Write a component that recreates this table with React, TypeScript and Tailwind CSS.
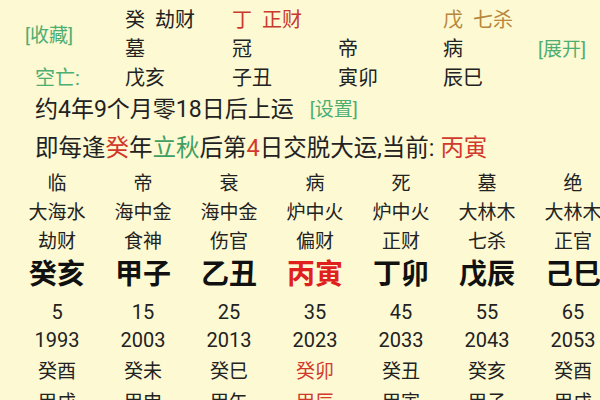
import React from 'react';

type Yun = {
  state: string;
  nayin: string;
  god: string;
  gz: string;
  age: number;
  year: number;
  y1: string;
  y2: string;
  current?: boolean;
};

const yunList: Yun[] = [
  {state: '临', nayin: '大海水', god: '劫财', gz: '癸亥', age: 5, year: 1993, y1: '癸酉', y2: '甲戌'},
  {state: '帝', nayin: '海中金', god: '食神', gz: '甲子', age: 15, year: 2003, y1: '癸未', y2: '甲申'},
  {state: '衰', nayin: '海中金', god: '伤官', gz: '乙丑', age: 25, year: 2013, y1: '癸巳', y2: '甲午'},
  {state: '病', nayin: '炉中火', god: '偏财', gz: '丙寅', age: 35, year: 2023, y1: '癸卯', y2: '甲辰', current: true},
  {state: '死', nayin: '炉中火', god: '正财', gz: '丁卯', age: 45, year: 2033, y1: '癸丑', y2: '甲寅'},
  {state: '墓', nayin: '大林木', god: '七杀', gz: '戊辰', age: 55, year: 2043, y1: '癸亥', y2: '甲子'},
  {state: '绝', nayin: '大林木', god: '正官', gz: '己巳', age: 65, year: 2053, y1: '癸酉', y2: '甲戌'},
];

const font = {fontFamily: 'Roboto, "Noto Sans CJK SC", sans-serif'};

// 대운 표의 한 줄
const YunRow = ({
  cells,
  className,
}: {
  cells: React.ReactNode[];
  className: string;
}) => (
  <div className={`grid grid-cols-[repeat(7,86px)] pl-[14px] w-[616px] ${className}`}>
    {cells.map((c, i) => (
      <div key={i} className="text-center">
        {c}
      </div>
    ))}
  </div>
);

const App = () => {
  return (
    <div
      className="w-[600px] h-[400px] overflow-hidden bg-[#fcf9d3] text-[#222222]"
      style={font}
    >
      {/* 상단 명식 */}
      <div className="grid grid-cols-[125px_107px_106px_105px_97px_60px] grid-rows-[29px_29px_29px] pt-[6px] text-[20px] leading-[29px]">
        <div className="row-span-2 flex items-center pl-[25px] text-[19px] text-[#4cae72]">[收藏]</div>
        <div className="whitespace-pre">癸  劫财</div>
        <div className="whitespace-pre text-[#c93a2e]">丁  正财</div>
        <div></div>
        <div className="whitespace-pre text-[#b8873c]">戊  七杀</div>
        <div className="row-span-3 flex items-center -ml-[2px] text-[19px] text-[#4cae72]">[展开]</div>

        <div>墓</div>
        <div>冠</div>
        <div>帝</div>
        <div>病</div>

        <div className="pl-[35px] text-[#4cae72]">空亡:</div>
        <div>戊亥</div>
        <div>子丑</div>
        <div>寅卯</div>
        <div>辰巳</div>
      </div>

      <div className="flex items-center h-[34px] pl-[35px] text-[23px]">
        <span>约4年9个月零18日后上运</span>
        <span className="ml-[16px] text-[19px] text-[#4cae72]">[设置]</span>
      </div>

      <div className="flex items-center h-[44px] pl-[35px] text-[23.5px] whitespace-nowrap">
        即每逢<span className="text-[#d2392c]">癸</span>年<span className="text-[#3f9f62]">立秋</span>后第
        <span className="text-[#d2392c]">4</span>日交脱大运,当前:&nbsp;<span className="text-[#d2392c]">丙寅</span>
      </div>

      {/* 대운 표 */}
      <div className="text-[19px] whitespace-nowrap">
        <YunRow className="h-[26px] leading-[26px]" cells={yunList.map((y) => y.state)} />
        <YunRow className="h-[32px] leading-[32px]" cells={yunList.map((y) => y.nayin)} />
        <YunRow className="h-[26px] leading-[26px]" cells={yunList.map((y) => y.god)} />
        <YunRow
          className="h-[40px] leading-[40px] text-[28px] font-bold"
          cells={yunList.map((y) => (
            <span className={y.current ? 'text-[#e0201c]' : 'text-[#111111]'}>{y.gz}</span>
          ))}
        />
        <YunRow className="h-[34px] leading-[34px] text-[20px]" cells={yunList.map((y) => y.age)} />
        <YunRow className="h-[23px] leading-[23px] text-[20px]" cells={yunList.map((y) => y.year)} />
        <YunRow
          className="h-[40px] leading-[40px]"
          cells={yunList.map((y) => (
            <span className={y.current ? 'text-[#d2392c]' : ''}>{y.y1}</span>
          ))}
        />
        <YunRow
          className="h-[22px] leading-[22px]"
          cells={yunList.map((y) => (
            <span className={y.current ? 'text-[#d2392c]' : ''}>{y.y2}</span>
          ))}
        />
      </div>
    </div>
  );
};

export default App;
